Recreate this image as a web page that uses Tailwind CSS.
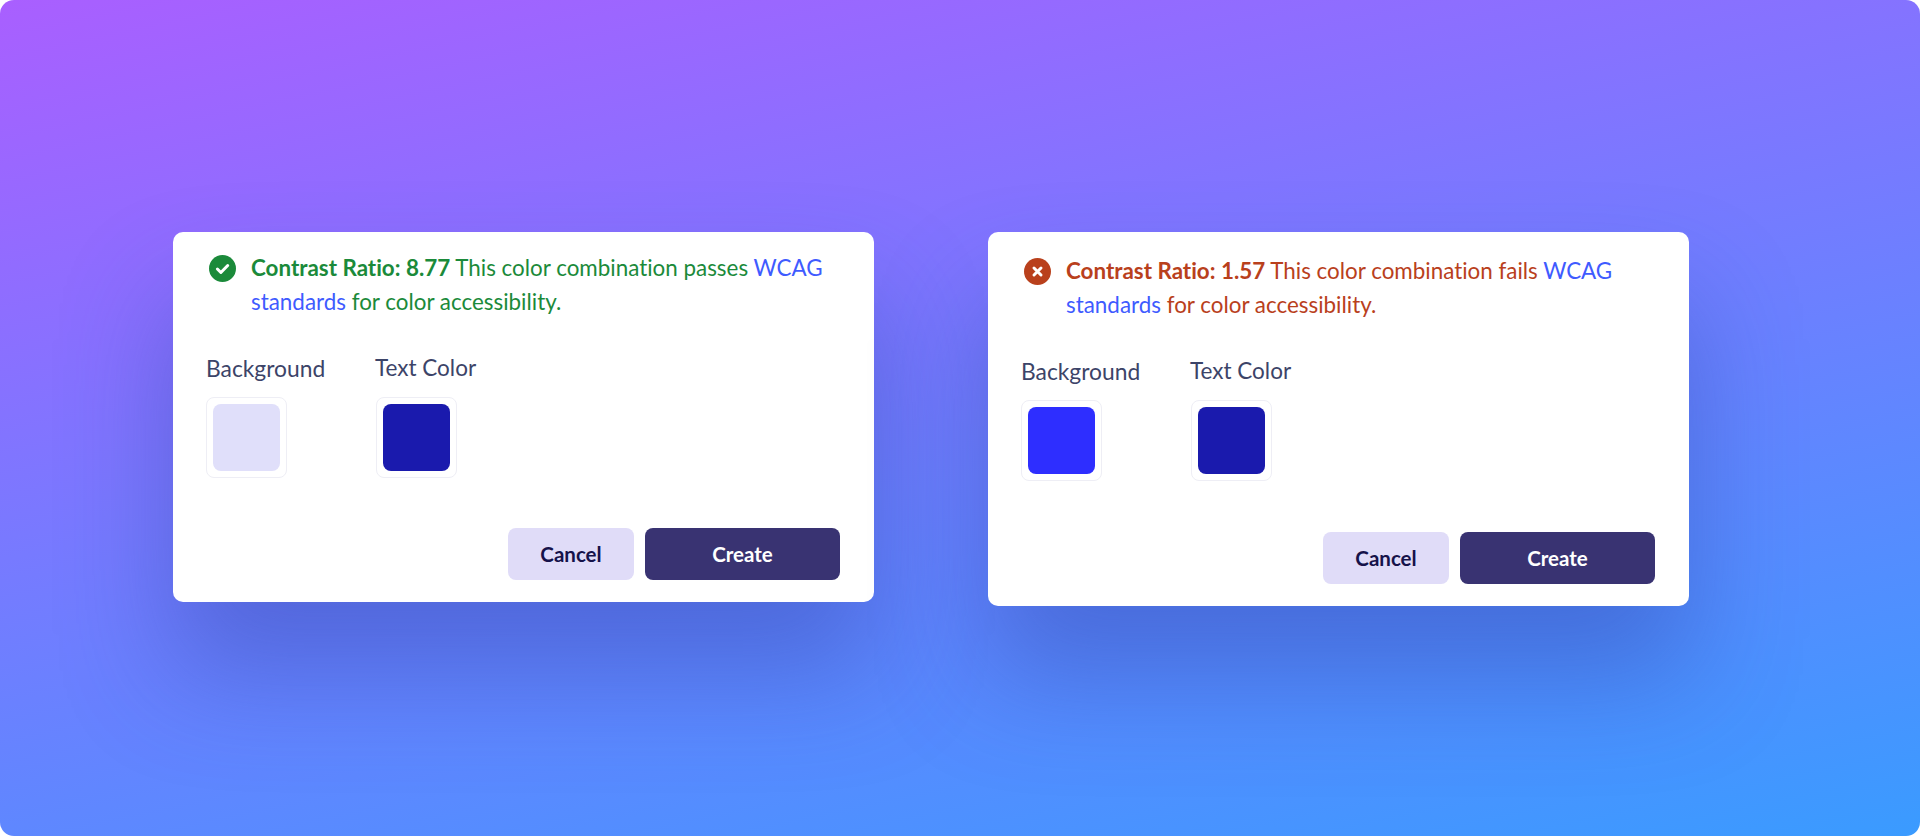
<!DOCTYPE html>
<html lang="en">
<head>
  <meta charset="UTF-8">
  <meta name="viewport" content="width=device-width, initial-scale=1.0">
  <title>Contrast Ratio</title>
  <script src="https://cdn.jsdelivr.net/npm/@tailwindcss/browser@4"></script>
</head>
<body class="bg-white font-['Lato',sans-serif] [font-variant-ligatures:none]">
  <div class="w-[1920px] h-[836px] overflow-hidden rounded-[14px] bg-[linear-gradient(168deg,#a95fff_0%,#3a9bff_100%)] flex items-start gap-[114px] pl-[173px] pt-[232px]">

    <!-- passing card -->
    <div class="w-[701px] h-[370px] flex flex-col bg-white rounded-[10px] pt-[19px] pb-[22px] pl-[33px] pr-[34px] shadow-[0_70px_110px_rgba(45,70,170,0.42)]">
      <div class="flex items-start">
        <svg class="w-[27px] h-[27px] ml-[3px] mt-[4px] shrink-0" viewBox="0 0 27 27">
          <circle cx="13.5" cy="13.5" r="13.5" fill="#1b8a3a"/>
          <path d="M8.4 14l3.5 3.5 6.8-7" fill="none" stroke="#fff" stroke-width="3" stroke-linecap="round" stroke-linejoin="round"/>
        </svg>
        <p class="ml-[15px] w-[610px] text-[22.4px] leading-[34px] text-[#1b8a3a]"><b class="font-bold">Contrast Ratio: 8.77</b> This color combination passes <a class="text-[#3f5bff]">WCAG standards</a> for color accessibility.</p>
      </div>
      <div class="flex gap-[50px] mt-[32px]">
        <div class="w-[119px]">
          <div class="text-[22.8px] leading-[34px] text-[#3c4468]">Background</div>
          <div class="mt-[12px] w-[81px] h-[81px] p-[6px] rounded-[8px] border border-[#eeeef5] bg-white">
            <div class="w-full h-full rounded-[8px] bg-[#e0dffa]"></div>
          </div>
        </div>
        <div>
          <div class="text-[22.5px] leading-[34px] text-[#3c4468]">Text Color</div>
          <div class="mt-[12px] ml-px w-[81px] h-[81px] p-[6px] rounded-[8px] border border-[#eeeef5] bg-white">
            <div class="w-full h-full rounded-[8px] bg-[#1a1aad]"></div>
          </div>
        </div>
      </div>
      <div class="mt-auto flex justify-end gap-[11px]">
        <button class="w-[126px] h-[52px] rounded-[8px] bg-[#e0dcf8] text-[#16124a] text-[20.5px] font-bold">Cancel</button>
        <button class="w-[195px] h-[52px] rounded-[8px] bg-[#393372] text-white text-[20.5px] font-bold">Create</button>
      </div>
    </div>

    <!-- failing card -->
    <div class="w-[701px] h-[374px] flex flex-col bg-white rounded-[10px] pt-[22px] pb-[22px] pl-[33px] pr-[34px] shadow-[0_70px_110px_rgba(45,70,170,0.42)]">
      <div class="flex items-start">
        <svg class="w-[27px] h-[27px] ml-[3px] mt-[4px] shrink-0" viewBox="0 0 27 27">
          <circle cx="13.5" cy="13.5" r="13.5" fill="#b9401c"/>
          <path d="M10 10l7 7M17 10l-7 7" fill="none" stroke="#fff" stroke-width="3" stroke-linecap="round"/>
        </svg>
        <p class="ml-[15px] w-[610px] text-[22.4px] leading-[34px] text-[#b9401c]"><b class="font-bold">Contrast Ratio: 1.57</b> This color combination fails <a class="text-[#3f5bff]">WCAG standards</a> for color accessibility.</p>
      </div>
      <div class="flex gap-[50px] mt-[32px]">
        <div class="w-[119px]">
          <div class="text-[22.8px] leading-[34px] text-[#3c4468]">Background</div>
          <div class="mt-[12px] w-[81px] h-[81px] p-[6px] rounded-[8px] border border-[#eeeef5] bg-white">
            <div class="w-full h-full rounded-[8px] bg-[#2e2eff]"></div>
          </div>
        </div>
        <div>
          <div class="text-[22.5px] leading-[34px] text-[#3c4468]">Text Color</div>
          <div class="mt-[12px] ml-px w-[81px] h-[81px] p-[6px] rounded-[8px] border border-[#eeeef5] bg-white">
            <div class="w-full h-full rounded-[8px] bg-[#1a1aad]"></div>
          </div>
        </div>
      </div>
      <div class="mt-auto flex justify-end gap-[11px]">
        <button class="w-[126px] h-[52px] rounded-[8px] bg-[#e0dcf8] text-[#16124a] text-[20.5px] font-bold">Cancel</button>
        <button class="w-[195px] h-[52px] rounded-[8px] bg-[#393372] text-white text-[20.5px] font-bold">Create</button>
      </div>
    </div>

  </div>
</body>
</html>
